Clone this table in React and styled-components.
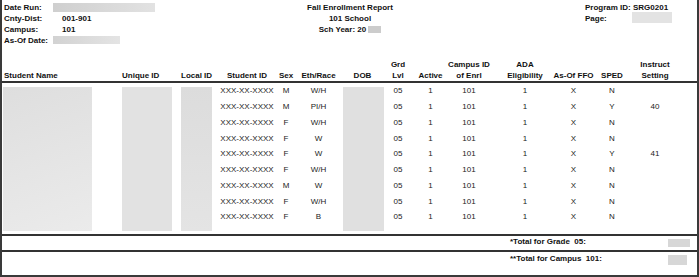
import React from 'react';
import styled, { createGlobalStyle } from 'styled-components';

const GlobalStyle = createGlobalStyle`
	html, body {
		margin: 0;
		padding: 0;
		background: #ffffff;
	}
	body {
		font-family: "Liberation Sans", Arial, sans-serif;
		font-size: 8px;
		color: #111111;
	}
`;

const COLUMNS = [
	{ w: 116, align: 'left', pad: 2, label: ['Student Name'] },
	{ w: 60, align: 'left', pad: 4, label: ['Unique ID'] },
	{ w: 40, align: 'left', pad: 3, label: ['Local ID'] },
	{ w: 58, label: ['Student ID'] },
	{ w: 20, label: ['Sex'] },
	{ w: 45, label: ['Eth/Race'] },
	{ w: 43, label: ['DOB'] },
	{ w: 28, label: ['Grd', 'Lvl'] },
	{ w: 37, label: ['Active'] },
	{ w: 40, label: ['Campus ID', 'of Enrl'] },
	{ w: 72, label: ['ADA', 'Eligibility'] },
	{ w: 25, label: ['As-Of FFO'] },
	{ w: 52, label: ['SPED'] },
	{ w: 34, label: ['Instruct', 'Setting'] },
];

const TEMPLATE = COLUMNS.map((c) => `${c.w}px`).join(' ') + ' 1fr';

const STUDENTS = [
	{ sex: 'M', eth: 'W/H', sped: 'N', setting: '' },
	{ sex: 'M', eth: 'PI/H', sped: 'Y', setting: '40' },
	{ sex: 'F', eth: 'W/H', sped: 'N', setting: '' },
	{ sex: 'F', eth: 'W', sped: 'N', setting: '' },
	{ sex: 'F', eth: 'W', sped: 'Y', setting: '41' },
	{ sex: 'F', eth: 'W/H', sped: 'N', setting: '' },
	{ sex: 'M', eth: 'W', sped: 'N', setting: '' },
	{ sex: 'F', eth: 'W/H', sped: 'N', setting: '' },
	{ sex: 'F', eth: 'B', sped: 'N', setting: '' },
];

// blurred (redacted) columns: grid column, left offset, width
const REDACTED = [
	{ col: 1, ml: 1, w: 89, bg: 'linear-gradient(160deg, #dedede, #ebebeb)' },
	{ col: 2, ml: 4, w: 50, bg: '#e2e2e2' },
	{ col: 3, ml: 3, w: 31, bg: 'linear-gradient(180deg, #dcdcdc, #e4e4e4)' },
	{ col: 7, ml: 2, w: 41, bg: '#e0e0e0' },
];

const Page = styled.div`
	box-sizing: border-box;
	width: 699px;
	height: 277px;
	border: 2px solid #3a3a3a;
	border-top: none;
	display: flex;
	flex-direction: column;
	overflow: hidden;
`;

const TopInfo = styled.div`
	display: grid;
	grid-template-columns: 248px 200px 1fr;
	height: 59px;
	box-sizing: border-box;
	padding-top: 1.5px;
	font-weight: bold;
	line-height: 11px;
`;

const InfoColumn = styled.div`
	display: flex;
	flex-direction: column;
	align-items: ${(p) => (p.$center ? 'center' : 'flex-start')};
	padding-left: ${(p) => p.$pad || 0}px;
`;

const InfoLine = styled.div`
	display: flex;
	align-items: center;
	height: 11px;
	white-space: nowrap;
`;

const InfoLabel = styled.span`
	width: ${(p) => p.$w}px;
	flex: none;
`;

const InfoValue = styled.span`
	margin-left: 9px;
`;

const Blur = styled.span`
	display: inline-block;
	flex: none;
	width: ${(p) => p.$w}px;
	height: ${(p) => p.$h}px;
	margin-left: ${(p) => p.$ml || 0}px;
	margin-top: ${(p) => p.$mt || 0}px;
	background: ${(p) => p.$bg || '#dadada'};
`;

const HeaderRow = styled.div`
	display: grid;
	grid-template-columns: ${TEMPLATE};
	align-items: end;
	border-bottom: 2px solid #333333;
	font-weight: bold;
	line-height: 11px;
`;

const HeaderCell = styled.div`
	display: flex;
	flex-direction: column;
	align-items: ${(p) => (p.$align === 'left' ? 'flex-start' : 'center')};
	padding-left: ${(p) => p.$pad || 0}px;
	white-space: nowrap;
	min-width: 0;
`;

const Body = styled.div`
	display: grid;
	grid-template-columns: ${TEMPLATE};
	grid-template-rows: repeat(9, 15.75px) 1fr;
	height: 151px;
	border-bottom: 2px solid #333333;
	color: #222222;
`;

const RedactedColumn = styled.div`
	grid-column: ${(p) => p.$col};
	grid-row: 1 / -1;
	width: ${(p) => p.$w}px;
	margin: 4px 0 3px ${(p) => p.$ml}px;
	background: ${(p) => p.$bg};
`;

const Cell = styled.div`
	grid-column: ${(p) => p.$col};
	grid-row: ${(p) => p.$row};
	display: flex;
	align-items: center;
	justify-content: center;
	white-space: nowrap;
	min-width: 0;
`;

const TotalRow = styled.div`
	display: grid;
	grid-template-columns: 508px 158px 1fr;
	height: ${(p) => p.$h}px;
	padding-top: ${(p) => p.$pt}px;
	box-sizing: border-box;
	border-bottom: ${(p) => (p.$ruled ? '2px solid #333333' : 'none')};
	flex: none;
`;

const TotalLabel = styled.div`
	grid-column: 2;
	grid-row: 1;
	font-weight: bold;
	line-height: 10px;
	white-space: pre;
`;

const TotalBox = styled.div`
	grid-column: 3;
	grid-row: 1;
	width: ${(p) => p.$w}px;
	height: ${(p) => p.$h}px;
	margin-top: ${(p) => p.$mt}px;
	background: #d7d7d7;
`;

const ReportHeader = () => (
	<TopInfo>
		<InfoColumn $pad={2}>
			<InfoLine>
				<InfoLabel $w={49}>Date Run:</InfoLabel>
				<Blur $w={102} $h={9} $bg="linear-gradient(90deg, #cfcfcf, #e2e2e2)" />
			</InfoLine>
			<InfoLine>
				<InfoLabel $w={49}>Cnty-Dist:</InfoLabel>
				<InfoValue>001-901</InfoValue>
			</InfoLine>
			<InfoLine>
				<InfoLabel $w={49}>Campus:</InfoLabel>
				<InfoValue>101</InfoValue>
			</InfoLine>
			<InfoLine>
				<InfoLabel $w={49}>As-Of Date:</InfoLabel>
				<Blur $w={67} $h={8} $bg="linear-gradient(90deg, #d2d2d2, #e4e4e4)" />
			</InfoLine>
		</InfoColumn>
		<InfoColumn $center>
			<InfoLine>Fall Enrollment Report</InfoLine>
			<InfoLine>101 School</InfoLine>
			<InfoLine>
				Sch Year: 20
				<Blur $w={13} $h={7} $ml={2} $bg="#cccccc" />
			</InfoLine>
		</InfoColumn>
		<InfoColumn $pad={135}>
			<InfoLine>Program ID: SRG0201</InfoLine>
			<InfoLine>
				<InfoLabel $w={47}>Page:</InfoLabel>
				<Blur $w={40} $h={11} $mt={-1} $bg="#e3e3e3" />
			</InfoLine>
		</InfoColumn>
	</TopInfo>
);

const App = () => (
	<>
		<GlobalStyle />
		<Page>
			<ReportHeader />

			<HeaderRow>
				{COLUMNS.map((c) => (
					<HeaderCell key={c.label.join(' ')} $align={c.align} $pad={c.pad}>
						{c.label.map((line) => (
							<span key={line}>{line}</span>
						))}
					</HeaderCell>
				))}
			</HeaderRow>

			<Body>
				{REDACTED.map((r) => (
					<RedactedColumn key={r.col} $col={r.col} $ml={r.ml} $w={r.w} $bg={r.bg} />
				))}
				{STUDENTS.map((s, i) => {
					const row = i + 1;
					return (
						<React.Fragment key={i}>
							<Cell $col={4} $row={row}>XXX-XX-XXXX</Cell>
							<Cell $col={5} $row={row}>{s.sex}</Cell>
							<Cell $col={6} $row={row}>{s.eth}</Cell>
							<Cell $col={8} $row={row}>05</Cell>
							<Cell $col={9} $row={row}>1</Cell>
							<Cell $col={10} $row={row}>101</Cell>
							<Cell $col={11} $row={row}>1</Cell>
							<Cell $col={12} $row={row}>X</Cell>
							<Cell $col={13} $row={row}>{s.sped}</Cell>
							<Cell $col={14} $row={row}>{s.setting}</Cell>
						</React.Fragment>
					);
				})}
			</Body>

			<TotalRow $h={16} $pt={0.5} $ruled>
				<TotalLabel>{'*Total for Grade  05:'}</TotalLabel>
				<TotalBox $w={22} $h={8} $mt={2.5} />
			</TotalRow>
			<TotalRow $h={23} $pt={2}>
				<TotalLabel>{'**Total for Campus  101:'}</TotalLabel>
				<TotalBox $w={19} $h={10} $mt={1} />
			</TotalRow>
		</Page>
	</>
);

export default App;
